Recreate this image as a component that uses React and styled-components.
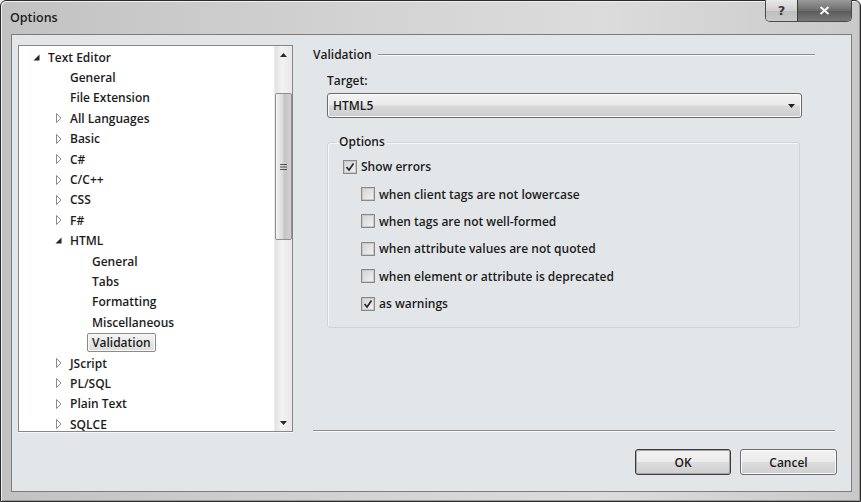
import React from 'react';
import styled, { createGlobalStyle } from 'styled-components';

const Global = createGlobalStyle`
  html, body { margin: 0; padding: 0; background: #ffffff; }
  body { font-family: "Open Sans", "Noto Sans", sans-serif; }
  * { box-sizing: border-box; }
`;

const Window = styled.div`
  width: 861px;
  height: 502px;
  display: flex;
  flex-direction: column;
  background: linear-gradient(to right, #c2c2c2 0%, #d4d4d4 45%, #dcdcdc 70%, #c9c9c9 100%);
  border: 1px solid #2b2b2b;
  border-radius: 6px 6px 0 0;
  padding: 0 8px 9px 10px;
  box-shadow: inset 1px 1px 0 #f0f0f0, inset -1px -1px 0 #9a9a9a;
`;

const TitleBar = styled.div`
  height: 33px;
  display: flex;
  align-items: flex-start;
  justify-content: space-between;
`;

const Title = styled.div`
  margin-top: 9px;
  margin-left: -1px;
  font-size: 12.5px;
  font-weight: 600;
  color: #1e1e1e;
  line-height: 16px;
`;

const CaptionGroup = styled.div`
  display: flex;
  margin-top: -1px;
  border: 1px solid #4a4a4a;
  border-top: none;
  border-radius: 0 0 5px 5px;
  overflow: hidden;
`;

const CaptionButton = styled.div`
  width: ${p => p.$w}px;
  height: 21px;
  display: flex;
  align-items: center;
  justify-content: center;
  font-family: "DejaVu Sans", sans-serif;
  font-size: 13px;
  font-weight: bold;
  color: ${p => (p.$dark ? '#f2f2f2' : '#3a3a3a')};
  background: ${p =>
    p.$dark
      ? 'linear-gradient(#9a9a9a, #6c6c6c 50%, #5a5a5a 51%, #787878)'
      : 'linear-gradient(#e8e8e8, #cfcfcf 50%, #bdbdbd 51%, #cacaca)'};
  border-left: ${p => (p.$dark ? '1px solid #3c3c3c' : 'none')};
`;

const Client = styled.div`
  flex: 1;
  display: flex;
  align-items: flex-start;
  background: #e3e6e9;
  border: 1px solid #7d7d7d;
  padding: 10px 0 0 6px;
  min-height: 0;
`;

const TreeBox = styled.div`
  width: 275px;
  height: 387px;
  display: flex;
  background: #ffffff;
  border: 1px solid #858789;
  box-shadow: 0 1px 0 #f7f7f7;
`;

const TreeList = styled.div`
  flex: 1;
  overflow: hidden;
  padding-top: 1px;
`;

const TreeRow = styled.div`
  height: 20.4px;
  display: flex;
  align-items: center;
  padding-left: ${p => 10 + p.$level * 22}px;
  font-size: 12px;
  font-weight: 600;
  color: #1c1c1c;
  white-space: nowrap;
`;

const Expander = styled.span`
  width: 19px;
  height: 12px;
  display: flex;
  align-items: center;
  justify-content: flex-start;
  padding-left: ${p => (p.$open ? 4 : 5)}px;
`;

const TreeLabel = styled.span`
  margin-left: -5px;
  padding: 0 4px;
  height: 19px;
  line-height: 17px;
  border: 1px solid ${p => (p.$selected ? '#8a8a8a' : 'transparent')};
  border-radius: 2px;
  background: ${p => (p.$selected ? 'linear-gradient(#f4f4f4, #dcdcdc)' : 'transparent')};
  box-shadow: ${p => (p.$selected ? 'inset 0 0 0 1px #fafafa' : 'none')};
`;

const ScrollBar = styled.div`
  width: 18px;
  display: flex;
  flex-direction: column;
  background: linear-gradient(to right, #e2e2e2, #f2f2f2 40%, #e8e8e8);
  border-left: 1px solid #ececec;
`;

const ScrollArrow = styled.div`
  height: 17px;
  display: flex;
  align-items: center;
  justify-content: center;
`;

const ScrollTrack = styled.div`
  flex: 1;
  display: flex;
  flex-direction: column;
`;

const ScrollThumb = styled.div`
  margin-top: 30px;
  height: 147px;
  border: 1px solid #8f8f8f;
  border-radius: 2px;
  background: linear-gradient(to right, #f4f4f4, #dadada 45%, #c4c4c4 55%, #d2d2d2);
  display: flex;
  align-items: center;
  justify-content: center;
`;

const Right = styled.div`
  flex: 1;
  align-self: stretch;
  margin-left: 20px;
  padding-right: 14px;
  display: flex;
  flex-direction: column;
`;

const HeadingRow = styled.div`
  margin-top: 1px;
  height: 16px;
  display: flex;
  align-items: center;
  gap: 6px;
`;

const HeadingText = styled.span`
  font-size: 12px;
  font-weight: 600;
  color: #1c1c1c;
`;

const EtchedLine = styled.div`
  flex: ${p => (p.$grow ? 1 : 'none')};
  margin-right: ${p => p.$mr || 0}px;
  margin-top: ${p => p.$mt || 0}px;
  border-top: 1px solid #8c8c8c;
  border-bottom: 1px solid #fbfbfb;
`;

const Section = styled.div`
  padding-left: 14px;
  display: flex;
  flex-direction: column;
  align-items: flex-start;
`;

const FieldLabel = styled.div`
  margin-top: 11px;
  font-size: 12px;
  font-weight: 600;
  line-height: 16px;
  color: #1c1c1c;
`;

const Select = styled.div`
  margin-top: 4px;
  width: 475px;
  height: 25px;
  display: flex;
  align-items: center;
  justify-content: space-between;
  padding: 0 6px 0 5px;
  border: 1px solid #6b6b6b;
  border-radius: 3px;
  background: linear-gradient(#f3f3f3 0%, #e9e9e9 48%, #d9d9d9 52%, #cdcdcd 100%);
  box-shadow: inset 0 0 0 1px #fbfbfb;
  font-size: 12px;
  font-weight: 600;
  color: #1c1c1c;
`;

const Group = styled.fieldset`
  margin: 16px 0 0 0;
  width: 473px;
  padding: 3px 0 10px 0;
  border: 1px solid #cfd5da;
  border-radius: 3px;
  box-shadow: inset 1px 1px 0 #f6f7f8;
`;

const Legend = styled.legend`
  margin-left: 9px;
  padding: 0 2px;
  font-size: 12px;
  font-weight: 600;
  line-height: 16px;
  color: #1c1c1c;
`;

const CheckRow = styled.label`
  height: 27.4px;
  display: flex;
  align-items: center;
  gap: 4px;
  padding-left: ${p => (p.$indent ? 33 : 15)}px;
  font-size: 12px;
  font-weight: 600;
  color: #1c1c1c;
`;

const Box = styled.span`
  width: 14px;
  height: 14px;
  display: flex;
  align-items: center;
  justify-content: center;
  border: 1px solid #8a8a8a;
  background: linear-gradient(135deg, #d2d2d2, #f4f4f4);
  box-shadow: inset 0 0 0 1px #c8c8c8;
`;

const Spacer = styled.div`
  flex: 1;
`;

const ButtonRow = styled.div`
  margin-top: 17px;
  margin-bottom: 16px;
  display: flex;
  justify-content: flex-end;
  gap: 9px;
`;

const Button = styled.div`
  width: ${p => p.$w}px;
  height: 26px;
  display: flex;
  align-items: center;
  justify-content: center;
  border: 1px solid ${p => (p.$default ? '#3a3a3a' : '#6f6f6f')};
  border-radius: 3px;
  background: linear-gradient(#f2f2f2 0%, #ebebeb 48%, #dcdcdc 52%, #cfcfcf 100%);
  box-shadow: inset 0 0 0 1px ${p => (p.$default ? '#a8a8a8' : '#fafafa')};
  font-size: 12px;
  font-weight: 600;
  color: #1c1c1c;
`;

const OpenArrow = () => (
  <svg width="7" height="7" viewBox="0 0 7 7">
    <polygon points="6.5,0.5 6.5,6.5 0.5,6.5" fill="#262626" />
  </svg>
);

const ClosedArrow = () => (
  <svg width="6" height="10" viewBox="0 0 6 10">
    <polygon points="0.5,0.5 5,5 0.5,9.5" fill="#ffffff" stroke="#8a8a8a" strokeWidth="1" />
  </svg>
);

const Check = () => (
  <svg width="10" height="10" viewBox="0 0 10 10">
    <path d="M1.5 5 L4 8 L8.5 1.5" fill="none" stroke="#2a2a2a" strokeWidth="1.7" />
  </svg>
);

const tree = [
  { label: 'Text Editor', level: 0, exp: 'open' },
  { label: 'General', level: 1 },
  { label: 'File Extension', level: 1 },
  { label: 'All Languages', level: 1, exp: 'closed' },
  { label: 'Basic', level: 1, exp: 'closed' },
  { label: 'C#', level: 1, exp: 'closed' },
  { label: 'C/C++', level: 1, exp: 'closed' },
  { label: 'CSS', level: 1, exp: 'closed' },
  { label: 'F#', level: 1, exp: 'closed' },
  { label: 'HTML', level: 1, exp: 'open' },
  { label: 'General', level: 2 },
  { label: 'Tabs', level: 2 },
  { label: 'Formatting', level: 2 },
  { label: 'Miscellaneous', level: 2 },
  { label: 'Validation', level: 2, selected: true },
  { label: 'JScript', level: 1, exp: 'closed' },
  { label: 'PL/SQL', level: 1, exp: 'closed' },
  { label: 'Plain Text', level: 1, exp: 'closed' },
  { label: 'SQLCE', level: 1, exp: 'closed' },
];

const checks = [
  { label: 'Show errors', checked: true },
  { label: 'when client tags are not lowercase', indent: true },
  { label: 'when tags are not well-formed', indent: true },
  { label: 'when attribute values are not quoted', indent: true },
  { label: 'when element or attribute is deprecated', indent: true },
  { label: 'as warnings', indent: true, checked: true },
];

export default function App() {
  return (
    <>
      <Global />
      <Window>
        <TitleBar>
          <Title>Options</Title>
          <CaptionGroup>
            <CaptionButton $w={31}>?</CaptionButton>
            <CaptionButton $w={54} $dark>
              <svg width="11" height="9" viewBox="0 0 11 9">
                <path d="M1.5 1 L9.5 8 M9.5 1 L1.5 8" stroke="#f4f4f4" strokeWidth="2.2" />
              </svg>
            </CaptionButton>
          </CaptionGroup>
        </TitleBar>
        <Client>
          <TreeBox>
            <TreeList>
              {tree.map((t, i) => (
                <TreeRow key={i} $level={t.level}>
                  <Expander $open={t.exp === 'open'}>
                    {t.exp === 'open' && <OpenArrow />}
                    {t.exp === 'closed' && <ClosedArrow />}
                  </Expander>
                  <TreeLabel $selected={t.selected}>{t.label}</TreeLabel>
                </TreeRow>
              ))}
            </TreeList>
            <ScrollBar>
              <ScrollArrow>
                <svg width="7" height="4" viewBox="0 0 7 4">
                  <polygon points="3.5,0 7,4 0,4" fill="#2a2a2a" />
                </svg>
              </ScrollArrow>
              <ScrollTrack>
                <ScrollThumb>
                  <svg width="7" height="8" viewBox="0 0 7 8">
                    <path d="M0 1.5 H7 M0 4 H7 M0 6.5 H7" stroke="#555" strokeWidth="1" />
                  </svg>
                </ScrollThumb>
              </ScrollTrack>
              <ScrollArrow>
                <svg width="7" height="4" viewBox="0 0 7 4">
                  <polygon points="0,0 7,0 3.5,4" fill="#2a2a2a" />
                </svg>
              </ScrollArrow>
            </ScrollBar>
          </TreeBox>
          <Right>
            <HeadingRow>
              <HeadingText>Validation</HeadingText>
              <EtchedLine $grow $mr={22} $mt={2} />
            </HeadingRow>
            <Section>
              <FieldLabel>Target:</FieldLabel>
              <Select>
                <span>HTML5</span>
                <svg width="7" height="4" viewBox="0 0 7 4">
                  <polygon points="0,0 7,0 3.5,4" fill="#1e1e1e" />
                </svg>
              </Select>
              <Group>
                <Legend>Options</Legend>
                {checks.map((c, i) => (
                  <CheckRow key={i} $indent={c.indent}>
                    <Box>{c.checked && <Check />}</Box>
                    <span>{c.label}</span>
                  </CheckRow>
                ))}
              </Group>
            </Section>
            <Spacer />
            <EtchedLine $mr={2} />
            <ButtonRow>
              <Button $w={96} $default>OK</Button>
              <Button $w={97}>Cancel</Button>
            </ButtonRow>
          </Right>
        </Client>
      </Window>
    </>
  );
}
